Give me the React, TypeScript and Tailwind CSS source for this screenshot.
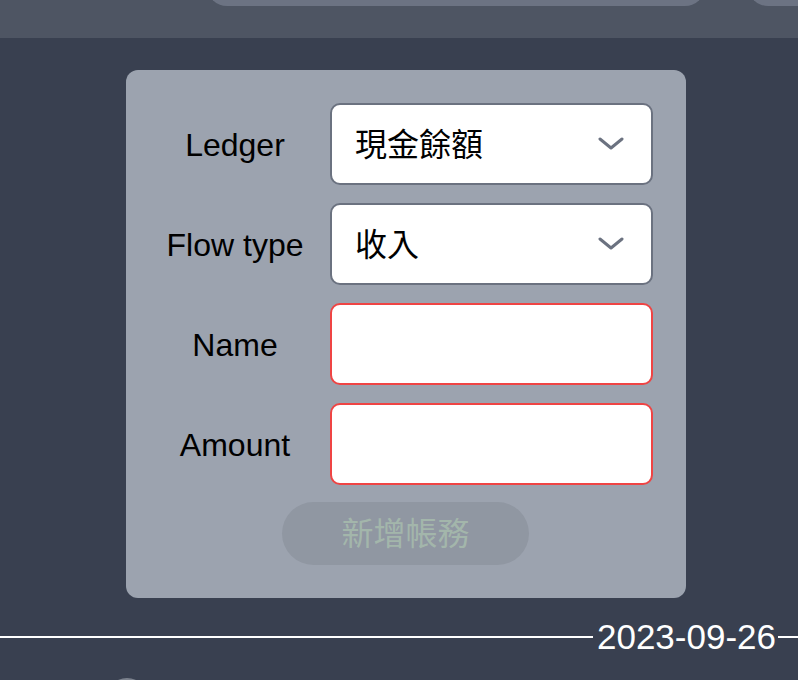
import React from "react";

function Chevron() {
  return (
    <svg width="26" height="16" viewBox="0 0 26 16" fill="none">
      <path d="M2 3 L13 12 L24 3" stroke="#6b7280" strokeWidth="3" strokeLinecap="round" strokeLinejoin="round" />
    </svg>
  );
}

function Select({ value }: { value: string }) {
  return (
    <div className="h-[82px] border-2 border-[#6b7280] rounded-[10px] bg-white flex items-center justify-between pl-[23px] pr-[27px] text-[32px] leading-none">
      <span className="pt-[2px]">{value}</span>
      <Chevron />
    </div>
  );
}

function Input() {
  return <div className="h-[82px] border-2 border-[#ef4444] rounded-[10px] bg-white" />;
}

export default function App() {
  const labels = ["Ledger", "Flow type", "Name", "Amount"];
  return (
    <div className="w-[798px] h-[680px] overflow-hidden bg-[#394050] text-black font-['Liberation_Sans','Noto_Sans_CJK_TC',sans-serif]">
      <header className="h-[38px] bg-[#4e5563] flex items-start overflow-hidden">
        <div className="shrink-0 ml-[207px] w-[498px] h-[40px] -mt-[34px] rounded-[20px] bg-[#6c7383]" />
        <div className="shrink-0 ml-[43px] w-[100px] h-[40px] -mt-[34px] rounded-[20px] bg-[#6c7383]" />
      </header>
      <main className="pt-[32px] pl-[126px]">
        <div className="w-[560px] rounded-[12px] bg-[#9ca3af] pt-[33px] pb-[33px] pl-[32px] pr-[33px] flex flex-col">
          <div className="grid grid-cols-[154px_323px] gap-x-[18px] gap-y-[18px] items-center">
            <div className="text-center text-[32px] leading-none pt-[2px]">{labels[0]}</div>
            <Select value="現金餘額" />
            <div className="text-center text-[32px] leading-none pt-[2px]">{labels[1]}</div>
            <Select value="收入" />
            <div className="text-center text-[32px] leading-none pt-[2px]">{labels[2]}</div>
            <Input />
            <div className="text-center text-[32px] leading-none pt-[2px]">{labels[3]}</div>
            <Input />
          </div>
          <button className="mt-[17px] self-center w-[247px] h-[63px] rounded-full bg-[#9097a2] text-[#a3b6ab] text-[32px] leading-none">
            新增帳務
          </button>
        </div>
      </main>
      <div className="mt-[19px] h-[40px] flex items-center">
        <div className="flex-1 h-[2px] bg-white" />
        <span className="ml-[4px] mr-[2px] text-white text-[35px] leading-[40px]">2023-09-26</span>
        <div className="w-[20px] h-[2px] bg-white" />
      </div>
      <div className="mt-[21px] ml-[105px] w-[44px] h-[44px] rounded-full bg-[#7b818d]" />
    </div>
  );
}
